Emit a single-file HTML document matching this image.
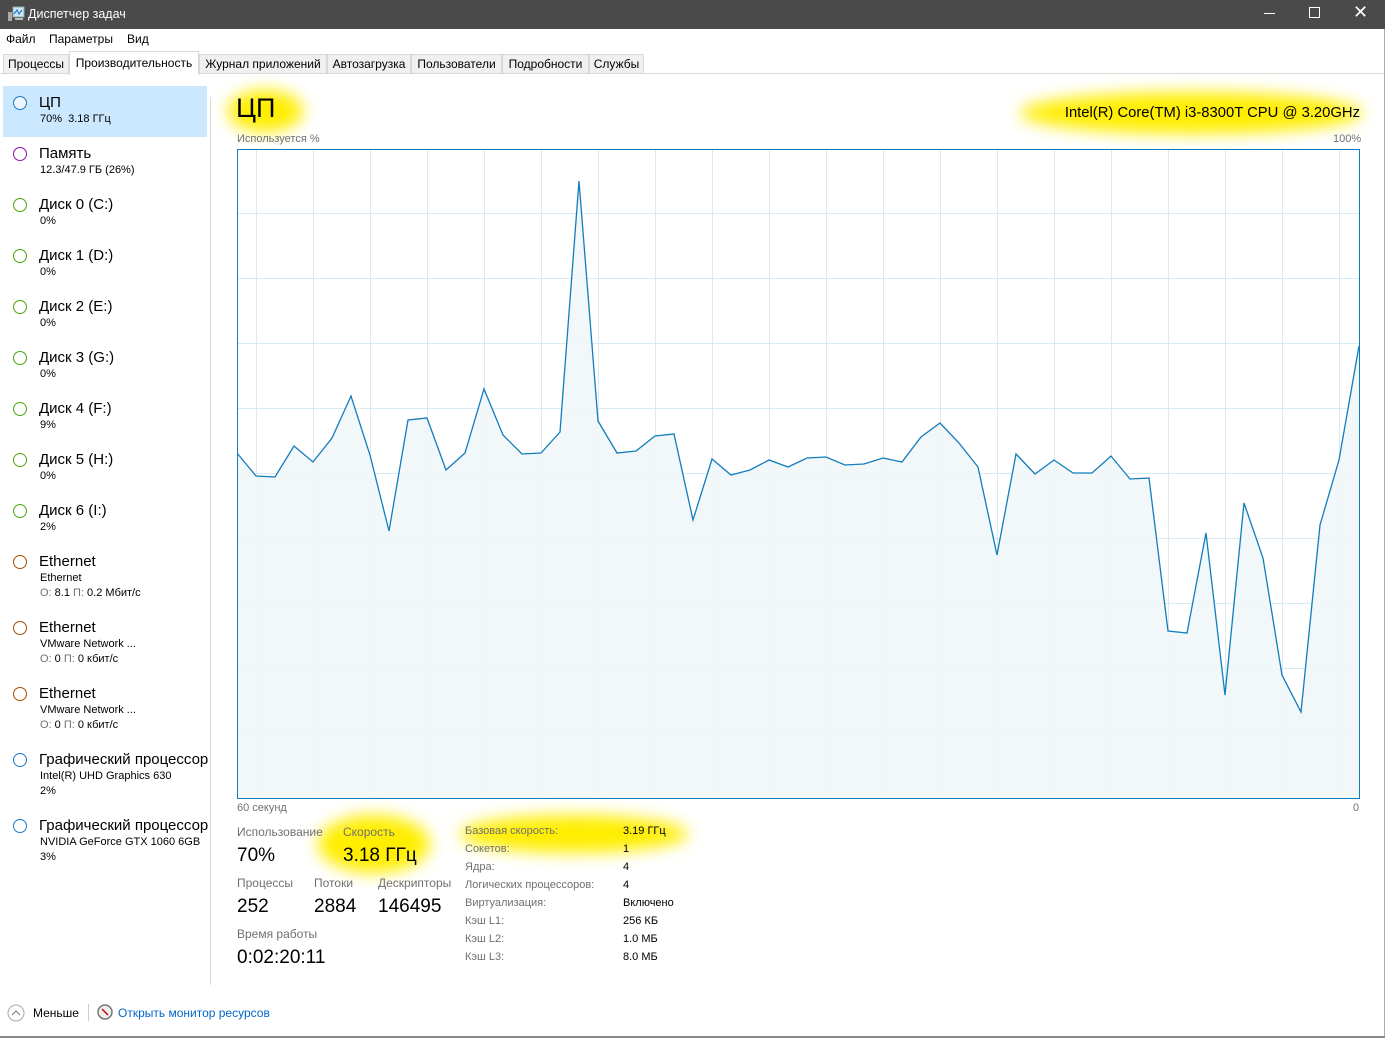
<!DOCTYPE html>
<html><head><meta charset="utf-8"><style>
*{margin:0;padding:0;box-sizing:border-box}
body{width:1385px;height:1038px;position:relative;background:#fff;font-family:"Liberation Sans","DejaVu Sans",sans-serif;color:#000;overflow:hidden}
.a{position:absolute;white-space:nowrap}
.title{left:0;top:0;width:1385px;height:29px;background:#4a4a4a;color:#fff}
.menu{font-size:12px}
.tabs{left:0;top:52px;width:1385px;height:22px;border-bottom:1px solid #d9d9d9}
.tab{position:absolute;top:54px;height:19px;background:#f0f0f0;border:1px solid #d9d9d9;border-bottom:none;font-size:12px;padding:2px 0 0 0;text-align:center}
.g{color:#707070}
.it .h{font-size:15px}
.it .s{font-size:11px}
.circ{position:absolute;width:14px;height:14px;border-radius:50%;border:1.3px solid}
.lbl{font-size:12px;color:#707070}
.val{font-size:19px}
.glow{position:absolute;background:#ffee00;border-radius:50%;filter:blur(8px)}
</style></head><body>
<div class="a title">
 <svg class="a" style="left:7px;top:5px" width="18" height="18"><rect x="6" y="2" width="11" height="10" fill="#cfe6f7" stroke="#8aa" /><polyline points="7,9 10,5 12,9 15,5" fill="none" stroke="#1a7fd0" stroke-width="1.2"/><rect x="1" y="7" width="4" height="9" fill="#aaa"/><rect x="8" y="13" width="8" height="2" fill="#bbb"/></svg>
 <span class="a" style="left:28px;top:7px;font-size:12.5px">Диспетчер задач</span>
 <div class="a" style="left:1264px;top:13px;width:11px;height:1px;background:#fff"></div>
 <div class="a" style="left:1309px;top:7px;width:11px;height:11px;border:1px solid #fff"></div>
 <span class="a" style="left:1353px;top:2px;font-size:18px;color:#fff">✕</span>
</div>
<span class="a menu" style="left:6px;top:32px">Файл</span>
<span class="a menu" style="left:49px;top:32px">Параметры</span>
<span class="a menu" style="left:127px;top:32px">Вид</span>
<div class="a tabs"></div>
<div class="tab" style="left:3px;width:66px">Процессы</div>
<div class="tab" style="left:69px;top:51px;height:24px;width:130px;background:#fff;padding-top:4px">Производительность</div>
<div class="tab" style="left:199px;width:128px">Журнал приложений</div>
<div class="tab" style="left:327px;width:84px">Автозагрузка</div>
<div class="tab" style="left:411px;width:91px">Пользователи</div>
<div class="tab" style="left:502px;width:87px">Подробности</div>
<div class="tab" style="left:589px;width:55px">Службы</div>

<div class="a" style="left:3px;top:86px;width:204px;height:51px;background:#cce8ff"></div>
<div class="a" style="left:210px;top:97px;width:1px;height:888px;background:#d9d9d9"></div>
<div class="a" style="left:1384px;top:29px;width:1px;height:1009px;background:#aaa"></div>

<div class="it">
<div class="circ" style="left:13px;top:96px;border-color:#1979ca;background:#eef6fd"></div><span class="a h" style="left:39px;top:94px">ЦП</span><span class="a s" style="left:40px;top:113px">70%&nbsp; 3.18 ГГц</span>
<div class="circ" style="left:13px;top:147px;border-color:#8b12ae"></div><span class="a h" style="left:39px;top:145px">Память</span><span class="a s" style="left:40px;top:164px">12.3/47.9 ГБ (26%)</span>
<div class="circ" style="left:13px;top:198px;border-color:#4da60c"></div><span class="a h" style="left:39px;top:196px">Диск 0 (C:)</span><span class="a s" style="left:40px;top:215px">0%</span>
<div class="circ" style="left:13px;top:249px;border-color:#4da60c"></div><span class="a h" style="left:39px;top:247px">Диск 1 (D:)</span><span class="a s" style="left:40px;top:266px">0%</span>
<div class="circ" style="left:13px;top:300px;border-color:#4da60c"></div><span class="a h" style="left:39px;top:298px">Диск 2 (E:)</span><span class="a s" style="left:40px;top:317px">0%</span>
<div class="circ" style="left:13px;top:351px;border-color:#4da60c"></div><span class="a h" style="left:39px;top:349px">Диск 3 (G:)</span><span class="a s" style="left:40px;top:368px">0%</span>
<div class="circ" style="left:13px;top:402px;border-color:#4da60c"></div><span class="a h" style="left:39px;top:400px">Диск 4 (F:)</span><span class="a s" style="left:40px;top:419px">9%</span>
<div class="circ" style="left:13px;top:453px;border-color:#4da60c"></div><span class="a h" style="left:39px;top:451px">Диск 5 (H:)</span><span class="a s" style="left:40px;top:470px">0%</span>
<div class="circ" style="left:13px;top:504px;border-color:#4da60c"></div><span class="a h" style="left:39px;top:502px">Диск 6 (I:)</span><span class="a s" style="left:40px;top:521px">2%</span>
<div class="circ" style="left:13px;top:555px;border-color:#a74f01"></div><span class="a h" style="left:39px;top:553px">Ethernet</span><span class="a s" style="left:40px;top:572px">Ethernet</span><span class="a s" style="left:40px;top:587px"><span class="g">О:</span> 8.1 <span class="g">П:</span> 0.2 Мбит/с</span>
<div class="circ" style="left:13px;top:621px;border-color:#a74f01"></div><span class="a h" style="left:39px;top:619px">Ethernet</span><span class="a s" style="left:40px;top:638px">VMware Network ...</span><span class="a s" style="left:40px;top:653px"><span class="g">О:</span> 0 <span class="g">П:</span> 0 кбит/с</span>
<div class="circ" style="left:13px;top:687px;border-color:#a74f01"></div><span class="a h" style="left:39px;top:685px">Ethernet</span><span class="a s" style="left:40px;top:704px">VMware Network ...</span><span class="a s" style="left:40px;top:719px"><span class="g">О:</span> 0 <span class="g">П:</span> 0 кбит/с</span>
<div class="a" style="left:0;top:745px;width:210px;height:130px;overflow:hidden">
<div class="circ" style="left:13px;top:8px;border-color:#1979ca"></div><span class="a h" style="left:39px;top:6px">Графический процессор</span><span class="a s" style="left:40px;top:25px">Intel(R) UHD Graphics 630</span><span class="a s" style="left:40px;top:40px">2%</span>
<div class="circ" style="left:13px;top:74px;border-color:#1979ca"></div><span class="a h" style="left:39px;top:72px">Графический процессор</span><span class="a s" style="left:40px;top:91px">NVIDIA GeForce GTX 1060 6GB</span><span class="a s" style="left:40px;top:106px">3%</span>
</div>
</div>

<div class="glow" style="left:228px;top:90px;width:75px;height:42px"></div>
<div class="glow" style="left:1020px;top:92px;width:342px;height:42px"></div>
<div class="glow" style="left:318px;top:815px;width:112px;height:58px"></div>
<div class="glow" style="left:460px;top:815px;width:228px;height:38px"></div>

<span class="a" style="left:236px;top:93px;font-size:27px">ЦП</span>
<span class="a" style="right:25px;top:105px;font-size:14.8px">Intel(R) Core(TM) i3-8300T CPU @ 3.20GHz</span>
<span class="a lbl" style="left:237px;top:133px;font-size:11px">Используется %</span>
<span class="a lbl" style="left:1333px;top:133px;font-size:11px">100%</span>
<span class="a lbl" style="left:237px;top:802px;font-size:11px">60 секунд</span>
<span class="a lbl" style="left:1353px;top:802px;font-size:11px">0</span>

<svg class="a" style="left:237px;top:149px" width="1123" height="650">
<g stroke="#d9eaf4" stroke-width="1">
<path d="M19.5 0V650M76.5 0V650M133.5 0V650M190.5 0V650M247.5 0V650M304.5 0V650M361.5 0V650M418.5 0V650M475.5 0V650M532.5 0V650M589.5 0V650M646.5 0V650M703.5 0V650M760.5 0V650M817.5 0V650M874.5 0V650M931.5 0V650M988.5 0V650M1045.5 0V650M1102.5 0V650"/>
<path d="M0 64.5H1123M0 129.5H1123M0 194.5H1123M0 259.5H1123M0 324.5H1123M0 389.5H1123M0 454.5H1123M0 519.5H1123M0 584.5H1123"/>
</g>
<polygon fill="#f1f6fa" fill-opacity="0.9" points="0,650 0,304 19,327 38,328 57,297 76,313 95,289 114,247 133,306 152,382 171,271 190,269 209,321 228,304 247,240 266,286 285,305 304,304 323,283 342,32 361,272 380,304 399,302 418,287 437,285 456,371 475,310 494,326 513,321 532,311 551,318 570,309 589,308 608,316 627,315 646,309 665,313 684,288 703,274 722,294 741,318 760,406 779,305 798,325 817,311 836,324 855,324 874,307 893,330 912,329 931,482 950,484 969,384 988,546 1007,354 1026,409 1045,526 1064,563 1083,376 1102,311 1122,197 1122,650"/>
<polyline fill="none" stroke="#117dbb" stroke-width="1.3" points="0,304 19,327 38,328 57,297 76,313 95,289 114,247 133,306 152,382 171,271 190,269 209,321 228,304 247,240 266,286 285,305 304,304 323,283 342,32 361,272 380,304 399,302 418,287 437,285 456,371 475,310 494,326 513,321 532,311 551,318 570,309 589,308 608,316 627,315 646,309 665,313 684,288 703,274 722,294 741,318 760,406 779,305 798,325 817,311 836,324 855,324 874,307 893,330 912,329 931,482 950,484 969,384 988,546 1007,354 1026,409 1045,526 1064,563 1083,376 1102,311 1122,197"/>
<rect x="0.5" y="0.5" width="1122" height="649" fill="none" stroke="#117dbb" stroke-width="1"/>
</svg>

<span class="a lbl" style="left:237px;top:825px">Использование</span>
<span class="a val" style="left:237px;top:845px">70%</span>
<span class="a lbl" style="left:343px;top:825px">Скорость</span>
<span class="a val" style="left:343px;top:845px">3.18 ГГц</span>
<span class="a lbl" style="left:237px;top:876px">Процессы</span>
<span class="a val" style="left:237px;top:896px">252</span>
<span class="a lbl" style="left:314px;top:876px">Потоки</span>
<span class="a val" style="left:314px;top:896px">2884</span>
<span class="a lbl" style="left:378px;top:876px">Дескрипторы</span>
<span class="a val" style="left:378px;top:896px">146495</span>
<span class="a lbl" style="left:237px;top:927px">Время работы</span>
<span class="a val" style="left:237px;top:947px">0:02:20:11</span>

<div style="font-size:11px">
<span class="a g" style="left:465px;top:825px">Базовая скорость:</span><span class="a" style="left:623px;top:825px">3.19 ГГц</span>
<span class="a g" style="left:465px;top:843px">Сокетов:</span><span class="a" style="left:623px;top:843px">1</span>
<span class="a g" style="left:465px;top:861px">Ядра:</span><span class="a" style="left:623px;top:861px">4</span>
<span class="a g" style="left:465px;top:879px">Логических процессоров:</span><span class="a" style="left:623px;top:879px">4</span>
<span class="a g" style="left:465px;top:897px">Виртуализация:</span><span class="a" style="left:623px;top:897px">Включено</span>
<span class="a g" style="left:465px;top:915px">Кэш L1:</span><span class="a" style="left:623px;top:915px">256 КБ</span>
<span class="a g" style="left:465px;top:933px">Кэш L2:</span><span class="a" style="left:623px;top:933px">1.0 МБ</span>
<span class="a g" style="left:465px;top:951px">Кэш L3:</span><span class="a" style="left:623px;top:951px">8.0 МБ</span>
</div>

<svg class="a" style="left:7px;top:1004px" width="18" height="18"><circle cx="9" cy="9" r="8" fill="none" stroke="#aaa"/><polyline points="5,11 9,7 13,11" fill="none" stroke="#888" stroke-width="1.2"/></svg>
<span class="a" style="left:33px;top:1006px;font-size:12px">Меньше</span>
<div class="a" style="left:88px;top:1004px;width:1px;height:17px;background:#ccc"></div>
<svg class="a" style="left:97px;top:1004px" width="16" height="16"><circle cx="8" cy="8" r="7" fill="#eee" stroke="#777" stroke-width="1.5"/><line x1="5" y1="5" x2="11" y2="11" stroke="#c00" stroke-width="1.5"/></svg>
<span class="a" style="left:118px;top:1006px;font-size:12px;color:#0066cc">Открыть монитор ресурсов</span>
<div class="a" style="left:0;top:1036px;width:1385px;height:2px;background:#888"></div>
</body></html>
